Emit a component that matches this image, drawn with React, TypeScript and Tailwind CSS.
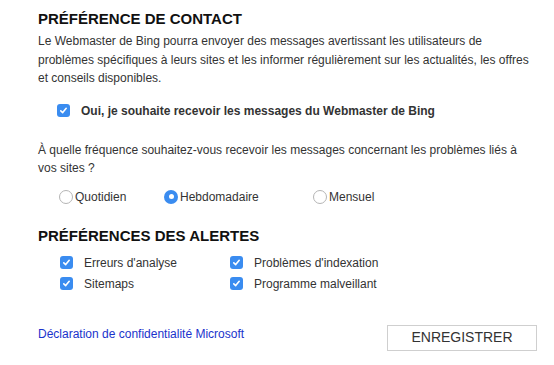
import { useState } from "react";

function Check({ checked, onChange }: { checked: boolean; onChange: () => void }) {
  return (
    <button
      type="button"
      onClick={onChange}
      className={
        "flex h-[13px] w-[13px] shrink-0 items-center justify-center rounded-[3px] " +
        (checked ? "bg-[#3a8cf0]" : "border border-[#b5b5b5] bg-white")
      }
    >
      {checked && (
        <svg width="9" height="9" viewBox="0 0 9 9">
          <path d="M1.8 4.8 L3.7 6.6 L7.2 2.3" fill="none" stroke="white" strokeWidth="1.6" strokeLinecap="round" strokeLinejoin="round" />
        </svg>
      )}
    </button>
  );
}

function Radio({ checked, onClick }: { checked: boolean; onClick: () => void }) {
  return (
    <button
      type="button"
      onClick={onClick}
      className={
        "flex h-[14px] w-[14px] shrink-0 items-center justify-center rounded-full " +
        (checked ? "bg-[#3a8cf0]" : "border border-[#b5b5b5] bg-white")
      }
    >
      {checked && <span className="h-[5px] w-[5px] rounded-full bg-white" />}
    </button>
  );
}

export default function App() {
  const [optIn, setOptIn] = useState(true);
  const [freq, setFreq] = useState("hebdo");
  const [alerts, setAlerts] = useState({ crawl: true, index: true, sitemaps: true, malware: true });
  const toggle = (k: keyof typeof alerts) => setAlerts({ ...alerts, [k]: !alerts[k] });

  const freqs = [
    { id: "quot", label: "Quotidien", w: "w-[105px]" },
    { id: "hebdo", label: "Hebdomadaire", w: "w-[149px]" },
    { id: "mens", label: "Mensuel", w: "" },
  ];

  return (
    <div className="min-h-[365px] bg-white font-['Liberation_Sans',Arial,sans-serif] text-[#333]">
      <div className="ml-[38px] w-[500px] pt-[9px]">
        <h2 className="text-[15px] font-bold leading-[20px] text-[#111]">PRÉFÉRENCE DE CONTACT</h2>
        <p className="mt-[3px] text-[12px] leading-[18.5px]">
          Le Webmaster de Bing pourra envoyer des messages avertissant les utilisateurs de problèmes spécifiques à leurs sites et les informer régulièrement sur les actualités, les offres et conseils disponibles.
        </p>

        <label className="mt-[14px] ml-[19px] flex items-center gap-[11px] text-[12px] font-bold leading-[18px]">
          <Check checked={optIn} onChange={() => setOptIn(!optIn)} />
          <span>Oui, je souhaite recevoir les messages du Webmaster de Bing</span>
        </label>

        <p className="mt-[21px] text-[12px] leading-[18.5px]">
          À quelle fréquence souhaitez-vous recevoir les messages concernant les problèmes liés à vos sites ?
        </p>

        <div className="mt-[10px] ml-[21px] flex items-center text-[12px] leading-[18px]">
          {freqs.map((f) => (
            <label key={f.id} className={"flex items-center gap-[2px] " + f.w}>
              <Radio checked={freq === f.id} onClick={() => setFreq(f.id)} />
              <span>{f.label}</span>
            </label>
          ))}
        </div>

        <h2 className="mt-[20px] text-[15px] font-bold leading-[20px] text-[#111]">PRÉFÉRENCES DES ALERTES</h2>

        <div className="mt-[8px] ml-[22px] grid grid-cols-[170px_1fr] gap-y-[3px] text-[12px] leading-[18px]">
          <label className="flex items-center gap-[11px]">
            <Check checked={alerts.crawl} onChange={() => toggle("crawl")} />
            <span>Erreurs d'analyse</span>
          </label>
          <label className="flex items-center gap-[11px]">
            <Check checked={alerts.index} onChange={() => toggle("index")} />
            <span>Problèmes d'indexation</span>
          </label>
          <label className="flex items-center gap-[11px]">
            <Check checked={alerts.sitemaps} onChange={() => toggle("sitemaps")} />
            <span>Sitemaps</span>
          </label>
          <label className="flex items-center gap-[11px]">
            <Check checked={alerts.malware} onChange={() => toggle("malware")} />
            <span>Programme malveillant</span>
          </label>
        </div>

        <div className="mt-[32px] flex items-start justify-between">
          <a href="#" className="mt-[1px] text-[12px] leading-[16px] text-[#1a33cc]">
            Déclaration de confidentialité Microsoft
          </a>
          <button
            type="button"
            className="mr-[1px] h-[26px] w-[150px] border border-[#cfcfcf] bg-white text-[14px] text-[#333]"
          >
            ENREGISTRER
          </button>
        </div>
      </div>
    </div>
  );
}
